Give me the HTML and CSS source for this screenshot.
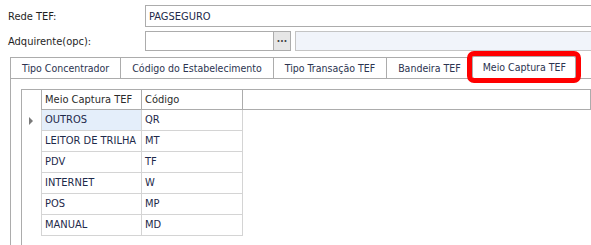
FILE: index.html
```html
<!DOCTYPE html>
<html lang="pt-BR">
<head>
    <meta charset="UTF-8">
    <meta name="viewport" content="width=device-width, initial-scale=1.0">
    <title>Meio Captura TEF</title>
    <link rel="stylesheet" href="styles.css">
</head>
<body>
    <!-- cabeçalho do cadastro -->
    <div class="form">
        <div class="form-row row-rede">
            <label class="form-label">Rede TEF:</label>
            <div class="field field-full">PAGSEGURO</div>
        </div>
        <div class="form-row row-adq">
            <label class="form-label">Adquirente(opc):</label>
            <div class="field field-code"></div>
            <div class="btn-lookup">...</div>
            <div class="field field-disabled"></div>
        </div>
    </div>

    <!-- abas -->
    <div class="tabs">
        <div class="tab-bar">
            <div class="tab">Tipo Concentrador</div>
            <div class="tab">Código do Estabelecimento</div>
            <div class="tab">Tipo Transação TEF</div>
            <div class="tab">Bandeira TEF</div>
            <div class="tab active">Meio Captura TEF</div>
        </div>
        <div class="tab-panel">
            <div class="grid">
                <div class="grid-row grid-header">
                    <div class="cell cell-ind"></div>
                    <div class="cell cell-meio">Meio Captura TEF</div>
                    <div class="cell cell-cod">Código</div>
                    <div class="cell cell-fill"></div>
                </div>
                <div class="grid-row">
                    <div class="cell cell-ind"><span class="row-arrow"></span></div>
                    <div class="cell cell-meio selected">OUTROS</div>
                    <div class="cell cell-cod">QR</div>
                </div>
                <div class="grid-row">
                    <div class="cell cell-ind"></div>
                    <div class="cell cell-meio">LEITOR DE TRILHA</div>
                    <div class="cell cell-cod">MT</div>
                </div>
                <div class="grid-row">
                    <div class="cell cell-ind"></div>
                    <div class="cell cell-meio">PDV</div>
                    <div class="cell cell-cod">TF</div>
                </div>
                <div class="grid-row">
                    <div class="cell cell-ind"></div>
                    <div class="cell cell-meio">INTERNET</div>
                    <div class="cell cell-cod">W</div>
                </div>
                <div class="grid-row">
                    <div class="cell cell-ind"></div>
                    <div class="cell cell-meio">POS</div>
                    <div class="cell cell-cod">MP</div>
                </div>
                <div class="grid-row">
                    <div class="cell cell-ind"></div>
                    <div class="cell cell-meio">MANUAL</div>
                    <div class="cell cell-cod">MD</div>
                </div>
            </div>
        </div>
    </div>
</body>
</html>
```

FILE: styles.css
```css
body {
    margin: 0;
    overflow: hidden;
    background-color: #fff;
    font-family: "DejaVu Sans Condensed", "Liberation Sans", Arial, sans-serif;
    font-size: 11px;
    color: #1f1f1f;
}

/* formulário */
.form {
    padding-top: 5px;
}

.form-row {
    display: flex;
    align-items: center;
    margin-right: -6px;
}

.row-rede {
    height: 22px;
}

.row-adq {
    height: 20px;
    margin-top: 4px;
}

.form-label {
    width: 137px;
    padding-left: 8px;
}

.field {
    height: 100%;
    box-sizing: border-box;
    border: 1px solid #acacac;
    background-color: #fff;
    padding-left: 3px;
    display: flex;
    align-items: center;
    color: #1e2a4a;
}

.field-full {
    flex: 1;
}

.field-code {
    width: 129px;
}

.btn-lookup {
    width: 17px;
    height: 100%;
    box-sizing: border-box;
    border: 1px solid #acacac;
    border-left: none;
    background-color: #e6e6e6;
    color: #444;
    font-size: 10px;
    font-weight: bold;
    text-align: center;
    line-height: 14px;
    margin-right: 4px;
}

.field-disabled {
    flex: 1;
    background-color: #f1f4fa;
    border-color: #c4c4c4;
}

/* abas */
.tabs {
    margin-top: 6px;
    margin-left: 10px;
}

.tab-bar {
    display: flex;
    align-items: flex-end;
}

.tab {
    flex-shrink: 0;
    white-space: nowrap;
    height: 21px;
    box-sizing: border-box;
    padding: 0 11px;
    font-size: 10.5px;
    line-height: 20px;
    border-top: 1px solid #acacac;
    border-left: 1px solid #acacac;
    color: #2c3450;
    background-color: #fff;
}

.tab.active {
    height: 22px;
    margin-top: -1px;
    border-right: 1px solid #acacac;
    padding: 0 9px 0 10px;
    outline: 5px solid #ff0000;
    border-radius: 2px;
    position: relative;
    z-index: 1;
}

.tab-panel {
    border-top: 1px solid #acacac;
    border-left: 1px solid #acacac;
    padding: 10px 0 0 10px;
    height: 156px;
}

/* grade */
.grid {
    border-left: 1px solid #acacac;
    height: 100%;
}

.grid-row {
    display: flex;
    height: 21px;
}

.cell {
    box-sizing: border-box;
    height: 100%;
    padding-left: 3px;
    line-height: 20px;
    border-right: 1px solid #d4d4d4;
    border-bottom: 1px solid #d4d4d4;
    color: #1e2a4a;
    white-space: nowrap;
    overflow: hidden;
}

.cell-ind {
    width: 20px;
    border-bottom: none;
    position: relative;
}

.cell-meio {
    width: 100px;
}

.cell-cod {
    width: 101px;
}

.cell-fill {
    flex: 1;
}

.grid-header {
    height: 20px;
    border-top: 1px solid #acacac;
}

.grid-header .cell {
    line-height: 19px;
    border-right-color: #acacac;
    border-bottom-color: #acacac;
    color: #2a2a2a;
}

.selected {
    background-color: #e4eefa;
}

.row-arrow {
    position: absolute;
    left: 7px;
    top: 7px;
    width: 0;
    height: 0;
    border-top: 4px solid transparent;
    border-bottom: 4px solid transparent;
    border-left: 4px solid #7a7a7a;
}
```
